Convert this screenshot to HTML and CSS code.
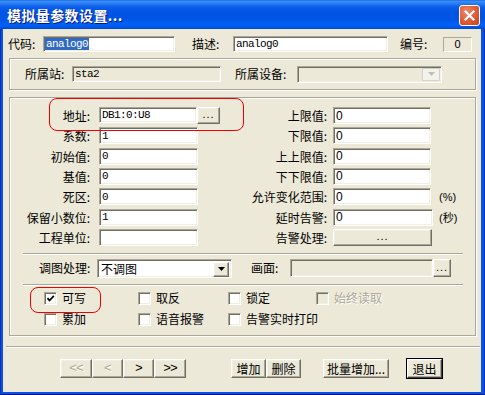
FILE: index.html
```html
<!DOCTYPE html>
<html>
<head>
<meta charset="utf-8">
<link rel="stylesheet" href="styles.css">
</head>
<body>
<div class="window">
  <div class="titlebar">
    <span class="title">模拟量参数设置...</span>
    <span class="close"><svg width="13" height="13" viewBox="0 0 13 13"><path d="M2.5 2.5L10.5 10.5M10.5 2.5L2.5 10.5" stroke="#fff" stroke-width="2.2" stroke-linecap="square" fill="none"/></svg></span>
  </div>
  <div class="client">
    <div class="row-top">
      <span class="lbl l-code">代码:</span>
      <span class="edit sunken e-code"><span class="hl mono">analog0</span></span>
      <span class="lbl l-desc">描述:</span>
      <span class="edit sunken e-desc mono">analog0</span>
      <span class="lbl l-num">编号:</span>
      <span class="static">0</span>
    </div>

    <div class="group g1">
      <span class="lbl l-sta">所属站:</span>
      <span class="edit sunken disabled e-sta mono">sta2</span>
      <span class="lbl l-dev">所属设备:</span>
      <span class="edit sunken disabled e-dev"><span class="xpdrop"><svg width="7" height="4" viewBox="0 0 7 4"><path d="M0 0H7L3.5 4Z" fill="#C2C0B3"/></svg></span></span>
    </div>

    <div class="group g2">
      <div class="grid">
        <span class="glbl">地址:</span>
        <span class="field"><span class="edit sunken e-addr mono">DB1:0:U8</span><span class="btn raised b-addr">...</span></span>
        <span class="rlbl">上限值:</span>
        <span class="edit sunken e-r sans">0</span>
        <span class="unit"></span>

        <span class="glbl">系数:</span>
        <span class="edit sunken e-l mono">1</span>
        <span class="rlbl">下限值:</span>
        <span class="edit sunken e-r sans">0</span>
        <span class="unit"></span>

        <span class="glbl">初始值:</span>
        <span class="edit sunken e-l mono">0</span>
        <span class="rlbl">上上限值:</span>
        <span class="edit sunken e-r sans">0</span>
        <span class="unit"></span>

        <span class="glbl">基值:</span>
        <span class="edit sunken e-l mono">0</span>
        <span class="rlbl">下下限值:</span>
        <span class="edit sunken e-r sans">0</span>
        <span class="unit"></span>

        <span class="glbl">死区:</span>
        <span class="edit sunken e-l mono">0</span>
        <span class="rlbl">允许变化范围:</span>
        <span class="edit sunken e-r sans">0</span>
        <span class="unit">(%)</span>

        <span class="glbl">保留小数位:</span>
        <span class="edit sunken e-l mono">1</span>
        <span class="rlbl">延时告警:</span>
        <span class="edit sunken e-r2 sans">0</span>
        <span class="unit">(秒)</span>

        <span class="glbl">工程单位:</span>
        <span class="edit sunken e-l mono"></span>
        <span class="rlbl">告警处理:</span>
        <span class="btn raised b-alarm">...</span>
        <span class="unit"></span>
      </div>

      <div class="sep sep-in sep-a"></div>

      <div class="row-map">
        <span class="lbl l-map">调图处理:</span>
        <span class="edit sunken e-map">不调图<span class="drop raised"><svg width="7" height="4" viewBox="0 0 7 4"><path d="M0 0H7L3.5 4Z" fill="#000"/></svg></span></span>
        <span class="lbl l-pic">画面:</span>
        <span class="edit sunken disabled e-pic"></span><span class="btn raised b-pic">...</span>
      </div>

      <div class="sep sep-in sep-b"></div>

      <div class="checks">
        <span class="chk"><span class="box sunken"><svg width="9" height="9" viewBox="0 0 9 9"><path d="M1.5 4.2L3.5 6.5L7.8 1.8" stroke="#000" stroke-width="1.8" fill="none"/></svg></span>可写</span>
        <span class="chk"><span class="box sunken"></span>取反</span>
        <span class="chk"><span class="box sunken"></span>锁定</span>
        <span class="chk dis"><span class="box sunken"></span>始终读取</span>
        <span class="chk"><span class="box sunken"></span>累加</span>
        <span class="chk"><span class="box sunken"></span>语音报警</span>
        <span class="chk"><span class="box sunken"></span>告警实时打印</span>
      </div>
    </div>

    <div class="sep sep-out"></div>

    <div class="btnrow">
      <span class="btn raised nav first dim">&lt;&lt;</span>
      <span class="btn raised nav dim n2">&lt;</span>
      <span class="btn raised nav n2">&gt;</span>
      <span class="btn raised nav">&gt;&gt;</span>
      <span class="btn raised act b-add">增加</span>
      <span class="btn raised act">删除</span>
      <span class="btn raised b-batch">批量增加...</span>
      <span class="btn raised b-exit">退出</span>
    </div>
  </div>
  <div class="mark m1"></div>
  <div class="mark m2"></div>
</div>
</body>
</html>
```

FILE: styles.css
```css
* { box-sizing: border-box; }
html, body { margin: 0; padding: 0; }
body {
  width: 485px;
  height: 395px;
  overflow: hidden;
  font-family: "Noto Sans CJK SC", "Liberation Sans", sans-serif;
  font-size: 12px;
  color: #000;
  background: #fff;
}
.window {
  position: relative;
  width: 485px;
  height: 395px;
  display: flex;
  flex-direction: column;
  background: #0A52E6;
  box-shadow: inset 1px 0 0 #0831B8, inset -1px 0 0 #0831B8, inset 0 -1px 0 #00138C;
}
.titlebar {
  height: 29px;
  flex: none;
  display: flex;
  align-items: center;
  justify-content: space-between;
  background: linear-gradient(to bottom, #0A5DDF 0px, #3D8FF6 1px, #2E80F2 3px, #0A5DEB 7px, #0054E3 13px, #0055E6 20px, #0061F5 24px, #0058EC 27px, #0044D6 29px);
}
.title {
  color: #fff;
  font-weight: bold;
  font-size: 14px;
  line-height: 16px;
  padding-left: 7px;
  letter-spacing: 0.4px;
  text-shadow: 1px 1px 0 #0A1883;
}
.close {
  width: 21px;
  height: 21px;
  margin-right: 5px;
  margin-top: 1px;
  border: 1px solid #fff;
  border-radius: 3px;
  background: radial-gradient(circle at 35% 30%, #F08A6A 0%, #E2613C 45%, #C7411C 100%);
  display: flex;
  align-items: center;
  justify-content: center;
}
.client {
  flex: 1;
  margin: 0 4px 3px 3px;
  background: #ECE9D8;
  padding-top: 7px;
  display: flex;
  flex-direction: column;
}

/* 3D borders */
.sunken {
  border-top: 1px solid #ACA899;
  border-left: 1px solid #ACA899;
  border-right: 1px solid #fff;
  border-bottom: 1px solid #fff;
  box-shadow: inset 1px 1px 0 #716F64, inset -1px -1px 0 #F1EFE2;
  background: #fff;
}
.raised {
  border-top: 1px solid #fff;
  border-left: 1px solid #fff;
  border-right: 1px solid #716F64;
  border-bottom: 1px solid #716F64;
  box-shadow: inset -1px -1px 0 #ACA899, inset 1px 1px 0 #F1EFE2;
  background: #ECE9D8;
}
.disabled { background: #ECE9D8; }

.lbl { display: inline-block; white-space: nowrap; line-height: 16px; }
.edit {
  display: flex;
  align-items: center;
  white-space: nowrap;
  overflow: hidden;
  padding-left: 2px;
  position: relative;
}
.mono { font-family: "Liberation Mono", monospace; font-size: 11px; letter-spacing: -0.6px; }
.sans { font-family: "Liberation Sans", sans-serif; font-size: 12px; }

/* top row */
.row-top { display: flex; align-items: center; height: 16px; padding-left: 5px; }
.l-code { width: 35px; }
.e-code { width: 132px; height: 16px; padding-left: 1px; }
.hl { background: #316AC5; color: #fff; padding: 0 1px; line-height: 12px; }
.l-desc { width: 41px; margin-left: 17px; }
.e-desc { width: 155px; height: 16px; }
.l-num { width: 43px; margin-left: 12px; }
.static {
  width: 29px;
  height: 15px;
  border-top: 1px solid #ACA899;
  border-left: 1px solid #ACA899;
  border-right: 1px solid #fff;
  border-bottom: 1px solid #fff;
  text-align: center;
  font-family: "Liberation Sans", sans-serif;
  font-size: 11px;
  line-height: 13px;
}

/* groups */
.group {
  border: 1px solid #ACA899;
  box-shadow: inset 1px 1px 0 #fff, 1px 1px 0 #fff;
  margin-left: 6px;
  width: 467px;
}
.g1 {
  margin-top: 6px;
  height: 32px;
  display: flex;
  align-items: center;
  padding-left: 15px;
}
.l-sta { width: 47px; }
.e-sta { width: 149px; height: 16px; }
.l-dev { width: 62px; margin-left: 14px; }
.e-dev { width: 145px; height: 17px; justify-content: flex-end; padding-right: 1px; }
.xpdrop {
  width: 18px;
  height: 13px;
  border: 1px solid #D4D2C6;
  border-radius: 1px;
  background: #F3F2EC;
  display: flex;
  align-items: center;
  justify-content: center;
}

.g2 {
  margin-top: 7px;
  height: 239px;
  padding-top: 9px;
}
.grid {
  display: grid;
  grid-template-columns: 89px 122px 112px 98px auto;
  grid-auto-rows: 17px;
  row-gap: 3.33px;
  align-items: center;
}
.glbl { text-align: right; padding-right: 9px; white-space: nowrap; line-height: 17px; }
.rlbl { text-align: right; padding-right: 6px; white-space: nowrap; line-height: 17px; }
.unit { padding-left: 8px; white-space: nowrap; font-family: "Liberation Sans", "Noto Sans CJK SC", sans-serif; font-size: 11px; }
.field { display: flex; height: 17px; align-items: stretch; }
.e-addr { width: 98px; height: 16px; }
.b-addr { width: 23px; height: 17px; }
.e-l { width: 99px; height: 17px; }
.e-r { width: 98px; height: 17px; }
.e-r2 { width: 100px; height: 17px; }
.btn {
  display: flex;
  align-items: center;
  justify-content: center;
  white-space: nowrap;
  line-height: 12px;
}
.b-addr, .b-alarm, .b-pic { font-family: "Liberation Sans", sans-serif; font-size: 11px; letter-spacing: 1px; padding-bottom: 3px; }
.b-alarm { width: 99px; height: 17px; }

.sep { height: 2px; border-top: 1px solid #ACA899; border-bottom: 1px solid #fff; }
.sep-in { margin-left: 13px; width: 440px; }
.sep-a { margin-top: 7px; }
.sep-b { margin-top: 6px; }

.row-map {
  display: flex;
  align-items: center;
  height: 19px;
  margin-top: 4px;
  padding-left: 29px;
}
.l-map { width: 58px; }
.e-map { width: 135px; height: 19px; padding-left: 3px; }
.drop {
  position: absolute;
  right: 2px;
  top: 2px;
  width: 16px;
  height: 15px;
  display: flex;
  align-items: center;
  justify-content: center;
}
.l-pic { width: 39px; margin-left: 19px; }
.e-pic { width: 143px; height: 18px; }
.b-pic { width: 18px; height: 18px; }

.checks {
  display: grid;
  grid-template-columns: 94px 90px 88px auto;
  grid-auto-rows: 21px;
  padding-left: 34px;
  margin-top: 2px;
  align-items: center;
}
.chk { display: flex; align-items: center; white-space: nowrap; line-height: 14px; }
.box {
  width: 13px;
  height: 13px;
  margin-right: 5px;
  display: flex;
  align-items: center;
  justify-content: center;
  flex: none;
}
.dis { color: #ACA899; text-shadow: 1px 1px 0 #fff; }
.dis .box { background: #ECE9D8; }

.sep-out { margin-top: 10px; margin-left: 3px; width: 474px; }

.btnrow {
  display: flex;
  height: 19px;
  margin-top: 11px;
  padding-left: 57px;
}
.nav { width: 32px; height: 19px; font-family: "Liberation Mono", monospace; font-size: 13px; letter-spacing: -1px; }
.n2 { width: 31px; }
.dim { color: #ACA899; text-shadow: 1px 1px 0 #fff; }
.act { width: 35px; height: 19px; }
.b-add { margin-left: 45px; }
.b-batch { width: 66px; height: 19px; margin-left: 22px; }
.b-exit {
  width: 35px;
  height: 19px;
  margin-left: 18px;
  outline: 1px solid #000;
  outline-offset: 0;
  border-right-color: #404040;
  border-bottom-color: #404040;
}

/* red annotation marks overlaid on the screenshot */
.mark {
  position: absolute;
  border: 1px solid #F00000;
  border-radius: 8px;
  pointer-events: none;
}
.m1 { left: 49px; top: 98px; width: 195px; height: 33px; }
.m2 { left: 30px; top: 287px; width: 71px; height: 26px; }
```
